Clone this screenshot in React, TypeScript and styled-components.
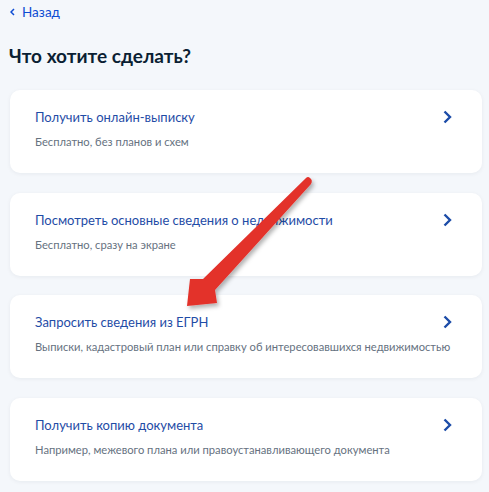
import React from 'react'
import styled, { createGlobalStyle } from 'styled-components'

const GlobalStyle = createGlobalStyle`
  html, body {
    margin: 0;
    padding: 0;
    background: #f4f7fb;
  }
  body {
    font-family: Lato, "Noto Sans", sans-serif;
    -webkit-font-smoothing: antialiased;
  }
`

const Page = styled.div`
  position: relative;
  width: 489px;
  height: 492px;
  overflow: hidden;
  padding: 0 7px 0 10px;
  box-sizing: border-box;
`

const BackLink = styled.a`
  display: flex;
  align-items: center;
  gap: 7px;
  height: 24px;
  color: #0d4cd3;
  font-size: 13.5px;
  text-decoration: none;
`

const Title = styled.h1`
  margin: 19px 0 22px -1px;
  font-size: 19px;
  line-height: 25px;
  font-weight: 700;
  color: #0b1f33;
`

const List = styled.div`
  display: flex;
  flex-direction: column;
  gap: 19.5px;
`

const Card = styled.div`
  display: grid;
  grid-template-columns: 1fr auto;
  align-items: center;
  align-content: start;
  row-gap: 9px;
  height: 83px;
  box-sizing: border-box;
  padding: 18px 30px 0 25px;
  background: #fff;
  border-radius: 10px;
  box-shadow: 0 1px 4px rgba(11, 31, 51, 0.06);
`

const CardTitle = styled.div`
  font-size: 13px;
  line-height: 18px;
  color: #1f4ca6;
`

const CardHint = styled.div`
  grid-column: 1 / -1;
  font-size: 11.2px;
  line-height: 14px;
  color: #66727f;
  white-space: nowrap;
`

const Chevron = styled.svg`
  flex-shrink: 0;
`

const Pointer = styled.svg`
  position: absolute;
  left: 0;
  top: 0;
  pointer-events: none;
`

const items = [
  { title: 'Получить онлайн-выписку', hint: 'Бесплатно, без планов и схем' },
  { title: 'Посмотреть основные сведения о недвижимости', hint: 'Бесплатно, сразу на экране' },
  { title: 'Запросить сведения из ЕГРН', hint: 'Выписки, кадастровый план или справку об интересовавшихся недвижимостью' },
  { title: 'Получить копию документа', hint: 'Например, межевого плана или правоустанавливающего документа' },
]

export default function App() {
  return (
    <Page>
      <GlobalStyle />
      <BackLink href="#">
        <svg width="5" height="8" viewBox="0 0 5 8">
          <path d="M4 1 L1 4 L4 7" fill="none" stroke="#0d4cd3" strokeWidth="1.5" />
        </svg>
        Назад
      </BackLink>
      <Title>Что хотите сделать?</Title>
      <List>
        {items.map((it) => (
          <Card key={it.title}>
            <CardTitle>{it.title}</CardTitle>
            <Chevron width="9" height="14" viewBox="0 0 9 14">
              <path d="M1.5 1.5 L7 7 L1.5 12.5" fill="none" stroke="#1c4ca8" strokeWidth="2.4" />
            </Chevron>
            <CardHint>{it.hint}</CardHint>
          </Card>
        ))}
      </List>
      <Pointer width="489" height="492" viewBox="0 0 489 492">
        <defs>
          <filter id="sh" x="-20%" y="-20%" width="140%" height="140%">
            <feDropShadow dx="2" dy="3" stdDeviation="2" floodColor="#000" floodOpacity="0.3" />
          </filter>
        </defs>
        <path
          filter="url(#sh)"
          fill="#e3302a"
          d="M310 178 Q313 180 311 184 L215 290 L217 303 L187 306 L190 279 L203 279 L306 178 Q308 176 310 178 Z"
        />
      </Pointer>
    </Page>
  )
}
